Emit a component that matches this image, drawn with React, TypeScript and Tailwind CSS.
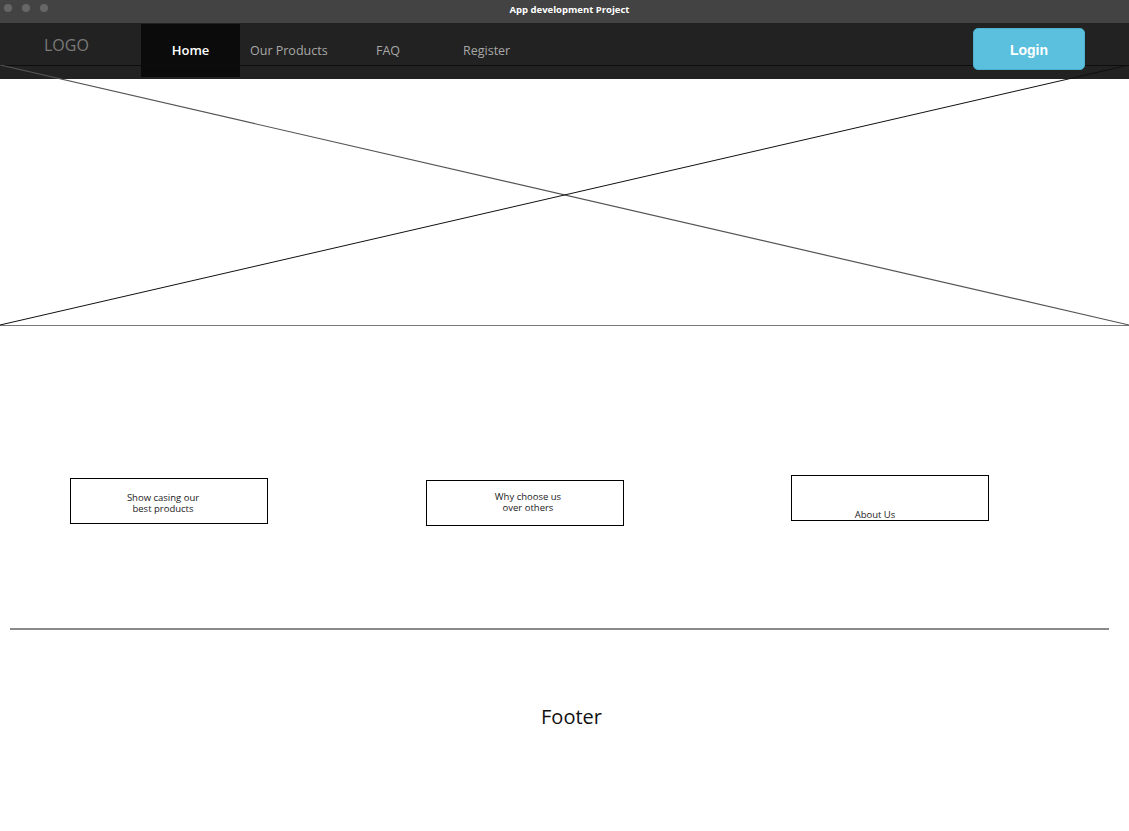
import React from "react";

export default function App() {
  const sans = { fontFamily: '"Open Sans", "Noto Sans", sans-serif' };
  return (
    <div className="w-[1129px] h-[831px] bg-white overflow-hidden" style={sans}>
      {/* Title bar */}
      <div className="relative h-[23px] bg-[#434343] flex items-center justify-center">
        <div className="absolute left-[4px] top-[4px] flex gap-[10px]">
          <span className="w-[8px] h-[8px] rounded-full bg-[#666]" />
          <span className="w-[8px] h-[8px] rounded-full bg-[#666]" />
          <span className="w-[8px] h-[8px] rounded-full bg-[#666]" />
        </div>
        <span className="text-[9.5px] font-bold text-white leading-none -mt-[4px] ml-[10px]">App development Project</span>
      </div>

      {/* Nav bar */}
      <div className="h-[56px] bg-[#222222] flex items-start">
        <div className="w-[141px] h-[44px] flex items-center pl-[44px] text-[16px] text-[#7a7a7a] leading-none">LOGO</div>
        <div className="w-[99px] h-[53px] mt-[1px] bg-[#0b0b0b] flex items-center justify-center text-[13px] font-semibold text-white pt-[1px]">Home</div>
        <div className="h-[56px] flex items-center text-[12.5px] text-[#a8a8a8] pl-[10px] w-[136px]">Our Products</div>
        <div className="h-[56px] flex items-center text-[12.5px] text-[#a8a8a8] w-[87px]">FAQ</div>
        <div className="h-[56px] flex items-center text-[12.5px] text-[#a8a8a8]">Register</div>
        <div className="flex-1" />
        <button
          className="relative z-10 mt-[5px] mr-[44px] w-[112px] h-[42px] rounded-[5px] bg-[#5bc0de] border border-[#4cb1cf] text-white text-[14px] font-semibold pt-[2px]"
          style={{ fontFamily: '"Liberation Sans", Arial, sans-serif' }}
        >
          Login
        </button>
      </div>

      {/* Image placeholder overlapping nav */}
      <div className="relative -mt-[14px] h-[261px]">
        <svg className="absolute inset-0" width="1129" height="261" viewBox="0 0 1129 261">
          <line x1="0" y1="0.5" x2="1129" y2="0.5" stroke="#0e0e0e" strokeWidth="1" />
          <line x1="0" y1="260.5" x2="1129" y2="260.5" stroke="#777" strokeWidth="1.2" />
          <line x1="0" y1="0" x2="1129" y2="260" stroke="#555" strokeWidth="1.2" />
          <line x1="0" y1="260" x2="1129" y2="0" stroke="#111" strokeWidth="1" />
        </svg>
      </div>

      {/* Cards */}
      <div className="h-[302px] flex items-start">
        <div className="ml-[70px] mt-[152px] w-[198px] h-[46px] border border-black flex flex-col items-center justify-center text-[9.5px] leading-[11px] text-[#222] pr-[12px] pt-[3px]">
          <span>Show casing our</span>
          <span>best products</span>
        </div>
        <div className="ml-[158px] mt-[154px] w-[198px] h-[46px] border border-black flex flex-col items-center pt-[10px] text-[9.5px] leading-[11px] text-[#222] pl-[6px]">
          <span>Why choose us</span>
          <span>over others</span>
        </div>
        <div className="ml-[167px] mt-[149px] w-[198px] h-[46px] border border-black flex flex-col items-center justify-end text-[9.5px] leading-[11px] text-[#222] pr-[30px]">
          <span>About Us</span>
        </div>
      </div>

      {/* Footer */}
      <div className="ml-[10px] w-[1099px] h-[2px] bg-[#8a8a8a]" />
      <div className="flex justify-center pt-[77px] pl-[14px]">
        <span className="text-[20px] text-[#111] leading-none">Footer</span>
      </div>
    </div>
  );
}
